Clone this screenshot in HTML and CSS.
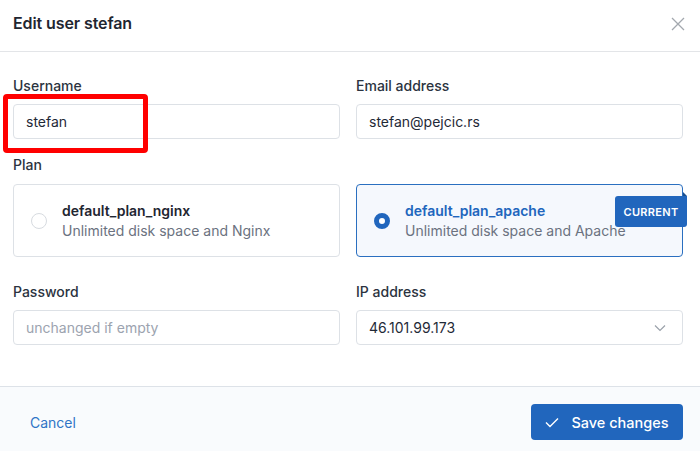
FILE: index.html
```html
<!DOCTYPE html>
<html>
<head>
<meta charset="utf-8">
<link rel="stylesheet" href="styles.css">
</head>
<body>
<div class="modal">
  <header class="head">
    <h1 class="title">Edit user stefan</h1>
    <svg class="close" width="14" height="14" viewBox="0 0 14 14"><path d="M1 1L13 13M13 1L1 13" stroke="#a3a8ae" stroke-width="1.3" fill="none"/></svg>
  </header>
  <main class="body">
    <div class="row first">
      <div class="field">
        <label class="label">Username</label>
        <div class="input">stefan</div>
      </div>
      <div class="field">
        <label class="label">Email address</label>
        <div class="input">stefan@pejcic.rs</div>
      </div>
    </div>
    <div class="field plan">
      <label class="label">Plan</label>
      <div class="row">
        <div class="card">
          <span class="radio"></span>
          <div class="card-text">
            <div class="card-title">default_plan_nginx</div>
            <div class="card-desc">Unlimited disk space and Nginx</div>
          </div>
        </div>
        <div class="card selected">
          <span class="radio on"></span>
          <div class="card-text">
            <div class="card-title">default_plan_apache</div>
            <div class="card-desc">Unlimited disk space and Apache</div>
          </div>
          <span class="badge">CURRENT</span>
        </div>
      </div>
    </div>
    <div class="row third">
      <div class="field">
        <label class="label">Password</label>
        <div class="input placeholder">unchanged if empty</div>
      </div>
      <div class="field">
        <label class="label">IP address</label>
        <div class="input select">46.101.99.173
          <svg width="12" height="8" viewBox="0 0 12 8"><path d="M1 1.5L6 6.5L11 1.5" stroke="#9aa1aa" stroke-width="1.2" fill="none"/></svg>
        </div>
      </div>
    </div>
  </main>
  <footer class="foot">
    <span class="cancel">Cancel</span>
    <button class="save">
      <svg width="14" height="11" viewBox="0 0 14 11"><path d="M1 5.5L5 9.5L13 1.5" stroke="#fff" stroke-width="1.4" fill="none"/></svg>
      Save changes
    </button>
  </footer>
  <div class="highlight"></div>
</div>
</body>
</html>
```
FILE: styles.css
```css
* { box-sizing: border-box; }
html, body { margin: 0; padding: 0; background: #fff; }
body { font-family: Inter, "Noto Sans", sans-serif; font-size: 14px; color: #1f2937; }
.modal { position: relative; width: 700px; height: 451px; display: flex; flex-direction: column; }
.head { height: 52px; border-bottom: 1px solid #e3e5e8; display: flex; align-items: center; justify-content: space-between; padding: 0 15px 0 13px; }
.title { margin: 0 0 6px; font-size: 16px; font-weight: 600; color: #1f2631; letter-spacing: -0.1px; }
.close { margin-bottom: 4px; }
.body { flex: 1; padding: 0 17px 0 13px; }
.row { display: grid; grid-template-columns: 327px 327px; column-gap: 16px; }
.row.first { margin-top: 25px; }
.field { display: flex; flex-direction: column; gap: 9px; }
.plan { margin-top: 17px; gap: 10px; }
.row.third { margin-top: 26px; }
.label { font-size: 14px; line-height: 18px; font-weight: 500; color: #2b3340; }
.input { height: 35px; border: 1px solid #dde1e6; border-radius: 4px; padding: 0 12px; display: flex; align-items: center; font-size: 14px; color: #1f2937; }
.placeholder { color: #9ca3af; }
.select { justify-content: space-between; padding-right: 16px; }
.card { position: relative; height: 73px; border: 1px solid #dde1e6; border-radius: 4px; display: flex; align-items: center; padding-left: 17px; }
.card.selected { border-color: #2a6fc0; background: #f5f8fd; }
.radio { width: 16px; height: 16px; border-radius: 50%; border: 1px solid #d7dbe0; background: #fff; flex: none; margin-right: 15px; }
.radio.on { border: 5px solid #2166bd; background: #fff; }
.card-title { font-weight: 600; line-height: 20px; color: #1f2631; }
.selected .card-title { color: #2166bd; }
.card-desc { line-height: 20px; color: #6b7280; }
.badge { position: absolute; right: -5px; top: 11px; width: 72px; height: 31px; background: #2166bd; color: #fff; font-size: 11px; font-weight: 600; letter-spacing: 0.3px; display: flex; align-items: center; justify-content: center; border-radius: 3px 0 3px 3px; }
.badge::before { content: ""; position: absolute; right: 0; top: -4px; border-left: 4px solid #1a4f8f; border-top: 4px solid transparent; }
.foot { height: 65px; background: #f9fbfd; border-top: 1px solid #dde2e8; display: flex; align-items: center; justify-content: space-between; padding: 6px 17px 0 30px; }
.cancel { color: #2f74c6; font-size: 14px; }
.save { height: 36px; width: 152px; border: none; border-radius: 4px; background: #2166bd; color: #fff; font-family: Inter, sans-serif; font-size: 14.5px; font-weight: 500; display: flex; align-items: center; justify-content: center; gap: 12px; padding: 0; }
.highlight { position: absolute; left: 3px; top: 94px; width: 145px; height: 59px; border: 5px solid #ff0000; border-radius: 4px; }
```
